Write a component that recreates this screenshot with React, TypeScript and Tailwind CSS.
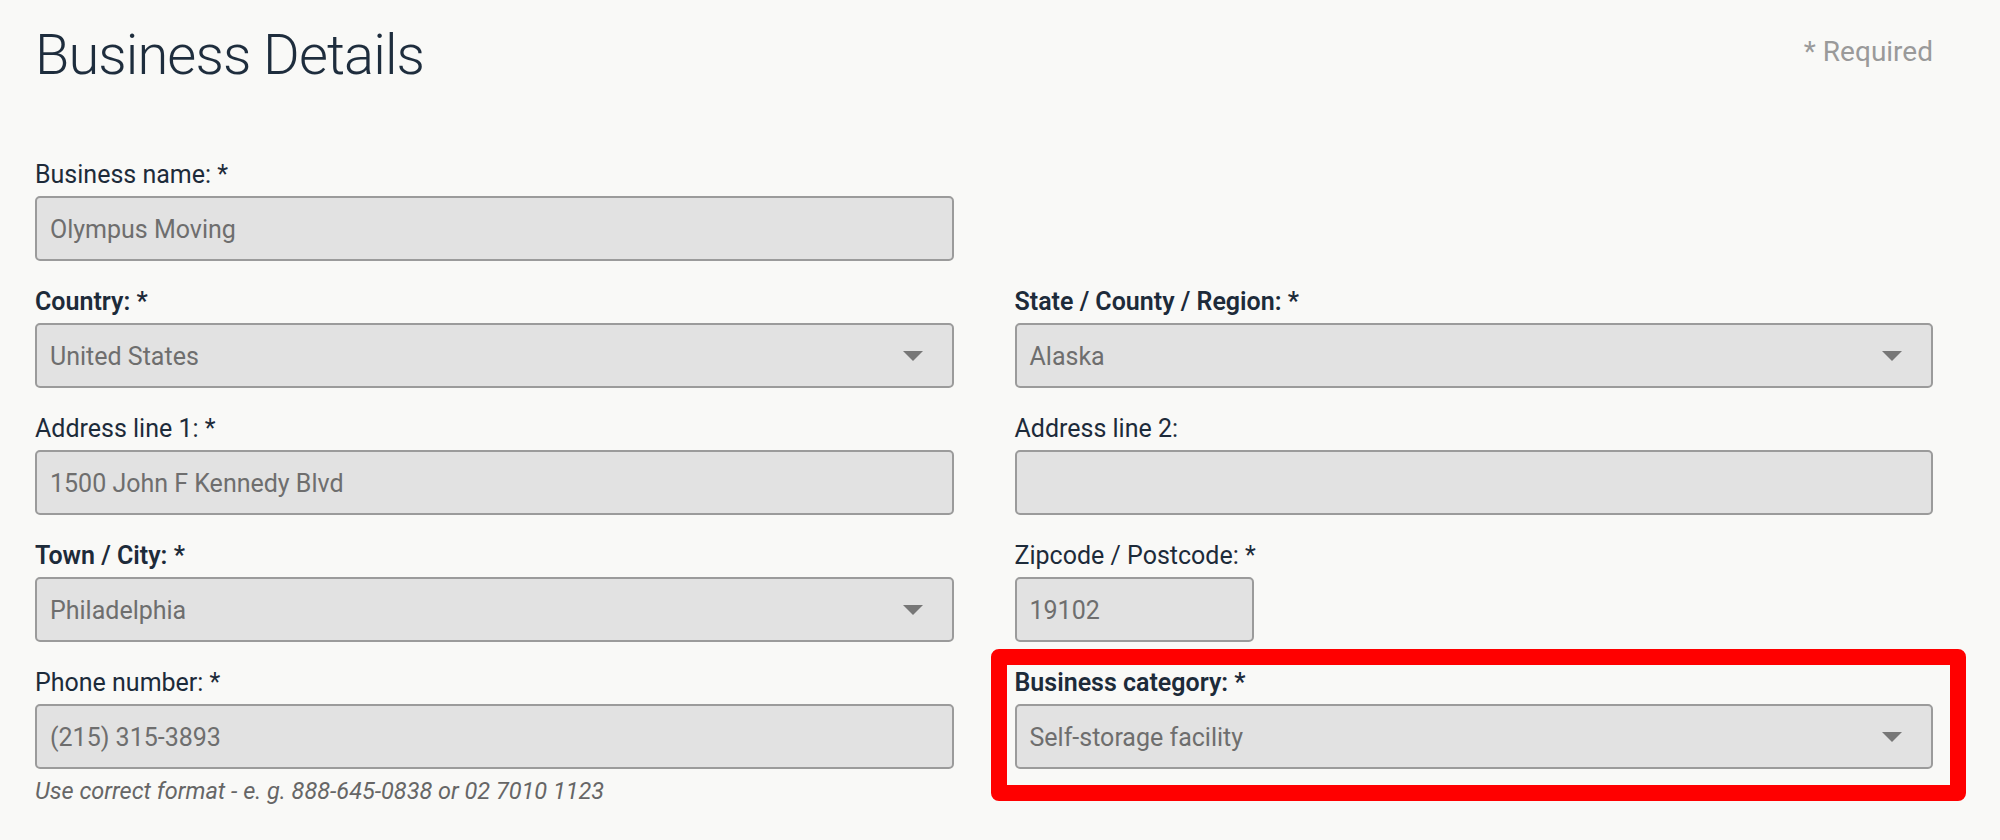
import type * as React from "react";

const fontStack = "font-['Roboto','Liberation_Sans',sans-serif]";

function Label({ text, bold }: { text: string; bold?: boolean }) {
  return (
    <label
      className={`mb-[3px] block text-[25px] leading-[36px] text-[#1d2b3a] ${bold ? "font-semibold" : "font-normal"}`}
    >
      {text}
    </label>
  );
}

function TextBox({ value, className = "w-full" }: { value: string; className?: string }) {
  return (
    <div
      className={`flex h-[65px] items-center rounded-[5px] border-2 border-[#9b9b9b] bg-[#e2e2e2] px-[13px] pt-[3px] text-[25px] text-[#6e6e6e] ${className}`}
    >
      {value}
    </div>
  );
}

function SelectBox({ value }: { value: string }) {
  return (
    <div className="relative flex h-[65px] w-full items-center rounded-[5px] border-2 border-[#9b9b9b] bg-[#e2e2e2] px-[13px] pt-[3px] text-[25px] text-[#6e6e6e]">
      <span>{value}</span>
      <svg
        className="absolute right-[29px] top-1/2 -translate-y-1/2"
        width="20"
        height="10"
        viewBox="0 0 20 10"
      >
        <polygon points="0,0 20,0 10,10" fill="#777777" />
      </svg>
    </div>
  );
}

function Field({
  label,
  bold,
  children,
}: {
  label: string;
  bold?: boolean;
  children: React.ReactNode;
}) {
  return (
    <div className="flex flex-col">
      <Label text={label} bold={bold} />
      {children}
    </div>
  );
}

export default function App() {
  return (
    <div className={`min-h-screen bg-[#f9f9f7] pl-[35px] pr-[67px] pt-[20px] ${fontStack}`}>
      <div className="flex items-start justify-between">
        <h1 className="text-[56px] font-light leading-[70px] tracking-[-0.9px] text-[#1e2d3d]">
          Business Details
        </h1>
        <span className="mt-[14px] text-[28px] leading-[36px] text-[#9a9a9a]">* Required</span>
      </div>

      <div className="mt-[67px] grid grid-cols-2 gap-x-[61px] gap-y-[23px]">
        <Field label="Business name: *">
          <TextBox value="Olympus Moving" />
        </Field>
        <div />

        <Field label="Country: *" bold>
          <SelectBox value="United States" />
        </Field>
        <Field label="State / County / Region: *" bold>
          <SelectBox value="Alaska" />
        </Field>

        <Field label="Address line 1: *">
          <TextBox value="1500 John F Kennedy Blvd" />
        </Field>
        <Field label="Address line 2:">
          <TextBox value="" />
        </Field>

        <Field label="Town / City: *" bold>
          <SelectBox value="Philadelphia" />
        </Field>
        <Field label="Zipcode / Postcode: *">
          <TextBox value="19102" className="w-[239px]" />
        </Field>

        <Field label="Phone number: *">
          <TextBox value="(215) 315-3893" />
          <p className="mt-[7px] text-[23.5px] italic leading-[30px] text-[#666666]">
            Use correct format - e. g. 888-645-0838 or 02 7010 1123
          </p>
        </Field>
        <div className="relative self-start">
          <Field label="Business category: *" bold>
            <SelectBox value="Self-storage facility" />
          </Field>
          <div className="pointer-events-none absolute -bottom-[32px] -left-[24px] -right-[33px] -top-[16px] rounded-[8px] border-[16px] border-[#ff0000]" />
        </div>
      </div>
    </div>
  );
}
